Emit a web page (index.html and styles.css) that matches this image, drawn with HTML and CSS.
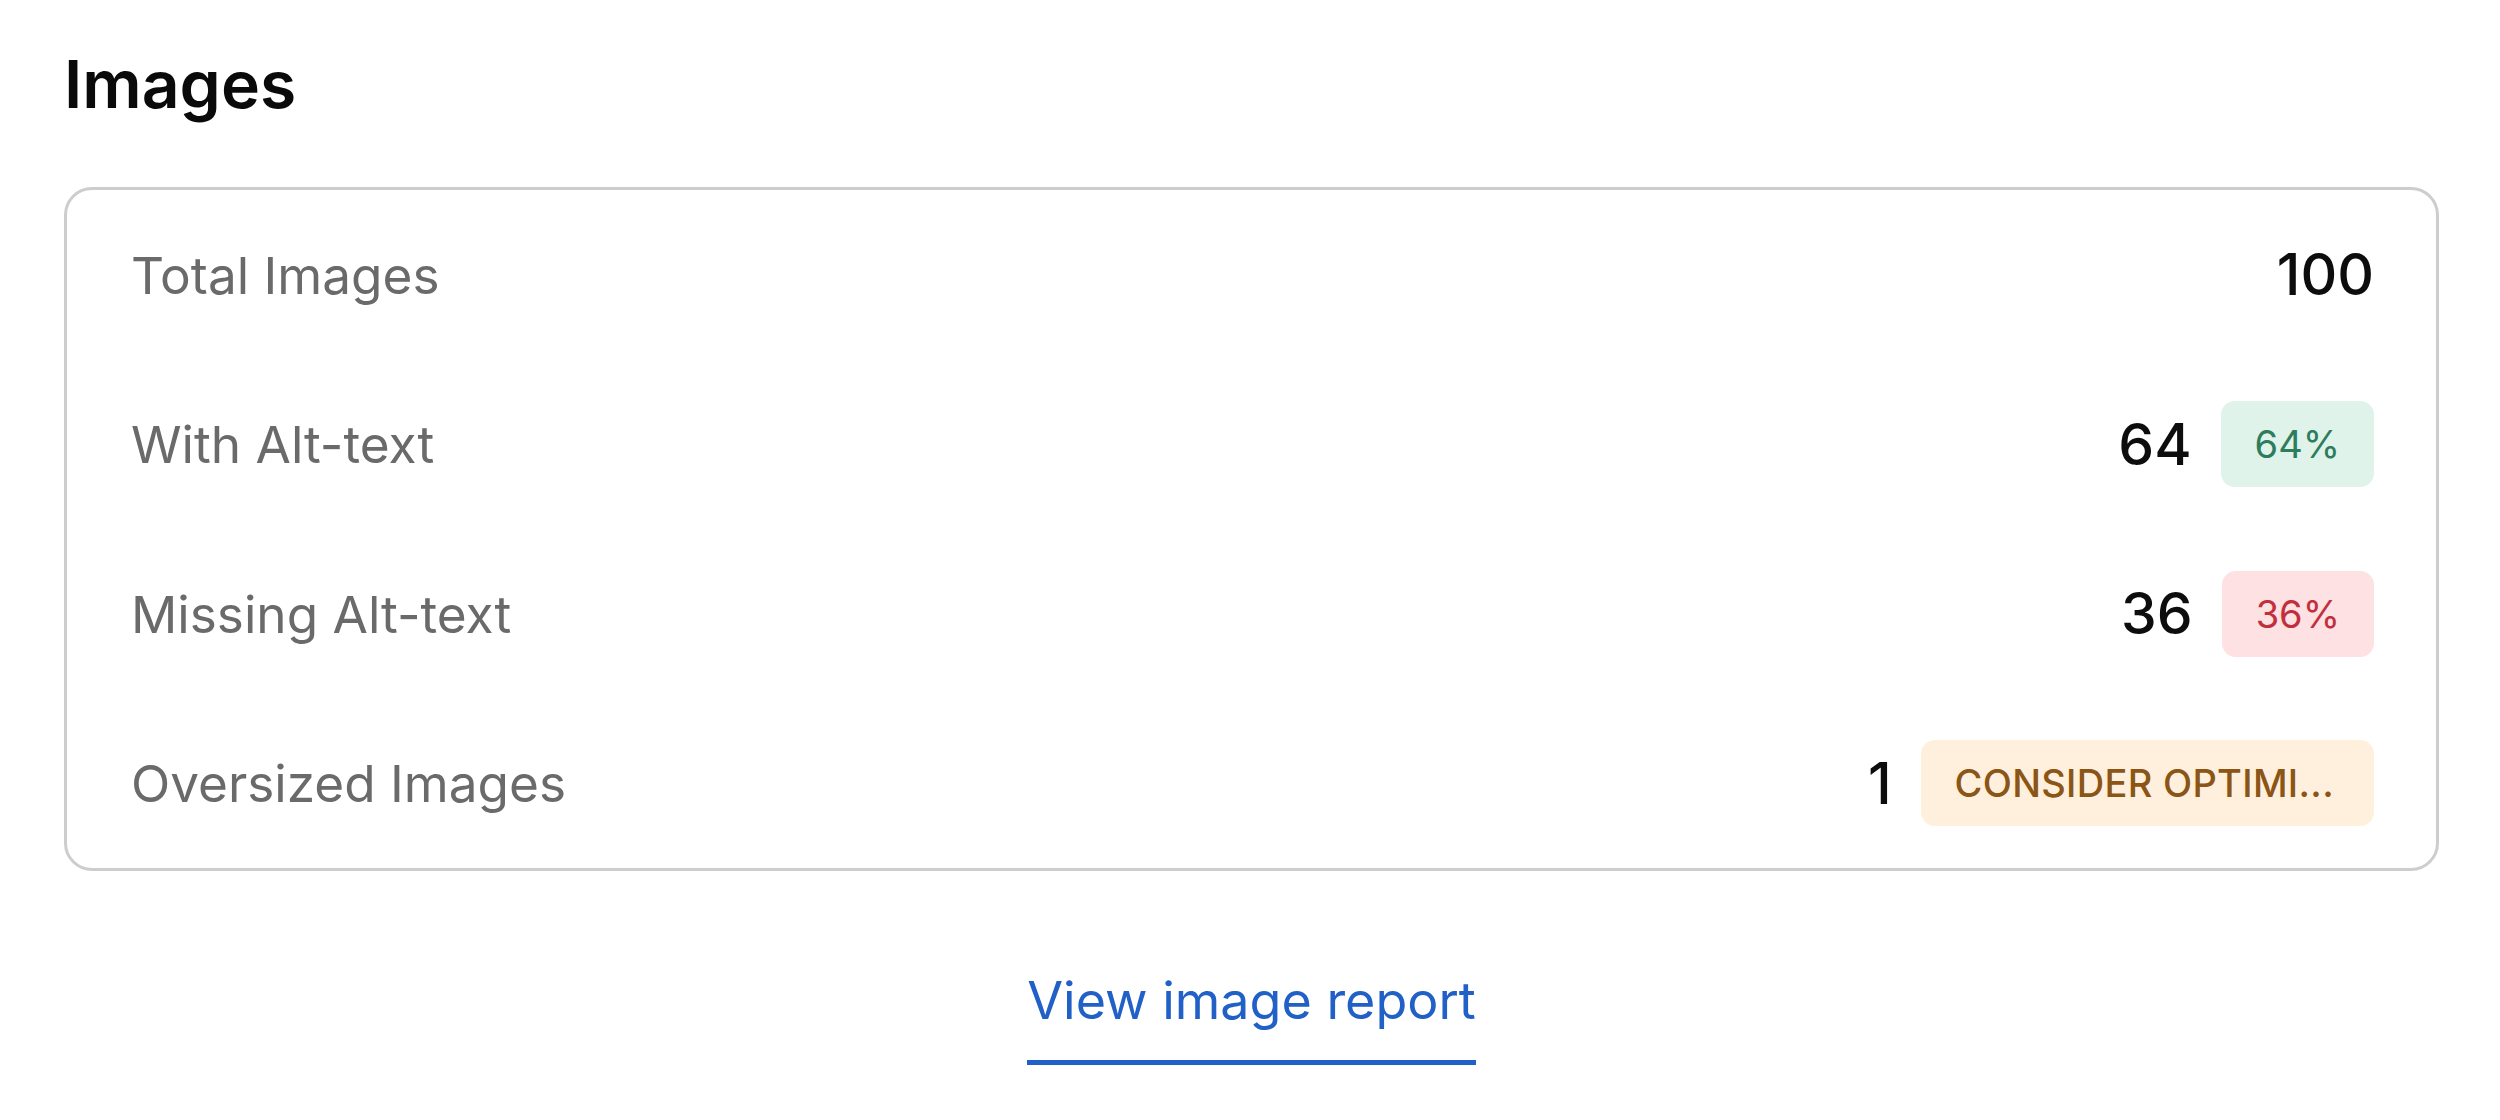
FILE: index.html
```html
<!DOCTYPE html>
<html lang="en">
<head>
<meta charset="utf-8">
<title>Images</title>
<link rel="stylesheet" href="styles.css">
</head>
<body>
<main class="page">
  <h2 class="title">Images</h2>
  <section class="card">
    <div class="row">
      <span class="label">Total Images</span>
      <div class="value"><span class="num">100</span></div>
    </div>
    <div class="row">
      <span class="label">With Alt-text</span>
      <div class="value"><span class="num">64</span><span class="badge badge-green">64%</span></div>
    </div>
    <div class="row">
      <span class="label">Missing Alt-text</span>
      <div class="value"><span class="num">36</span><span class="badge badge-red">36%</span></div>
    </div>
    <div class="row">
      <span class="label">Oversized Images</span>
      <div class="value"><span class="num">1</span><span class="badge badge-orange" title="Consider optimizing">CONSIDER OPTIMI...</span></div>
    </div>
  </section>
  <div class="link-wrap">
    <a class="report-link" href="#">View image report</a>
  </div>
</main>
</body>
</html>
```
FILE: styles.css
```css
* { box-sizing: border-box; }
html, body {
  margin: 0;
  background: #ffffff;
}
body {
  font-family: Inter, "Noto Sans", "Liberation Sans", sans-serif;
  color: #111;
}
.page {
  padding: 44px 61px 0 64px;
}
.title {
  margin: 0 0 63px 0;
  font-size: 66px;
  line-height: 80px;
  font-weight: 600;
  color: #0a0a0a;
}
.card {
  border: 3px solid #cdcdcd;
  border-radius: 28px;
  padding: 0 62px 0 64px;
  display: flex;
  flex-direction: column;
}
.row {
  height: 169.5px;
  display: flex;
  align-items: center;
  justify-content: space-between;
}
.label {
  font-size: 51.3px;
  color: #6a6a6a;
  font-weight: 400;
}
.value {
  display: flex;
  align-items: center;
  gap: 29px;
}
.num {
  font-size: 57px;
  font-weight: 500;
  color: #0d0d0d;
}
.badge {
  display: block;
  height: 86px;
  line-height: 86px;
  padding: 0 34px;
  border-radius: 14px;
  font-size: 38px;
  font-weight: 400;
  white-space: nowrap;
}
.badge-green {
  background: #dff3eb;
  color: #2d7c5c;
}
.badge-red {
  background: #fde1e3;
  color: #c22f3c;
}
.badge-orange {
  background: #fff0de;
  color: #8a5515;
  font-weight: 500;
  padding: 0 40px 0 34px;
  letter-spacing: 0.3px;
}
.link-wrap {
  display: flex;
  justify-content: center;
  margin-top: 98px;
}
.report-link {
  font-size: 52px;
  line-height: 64px;
  color: #2160c6;
  text-decoration: none;
  padding-bottom: 27px;
  border-bottom: 5px solid #2160c6;
}
```
